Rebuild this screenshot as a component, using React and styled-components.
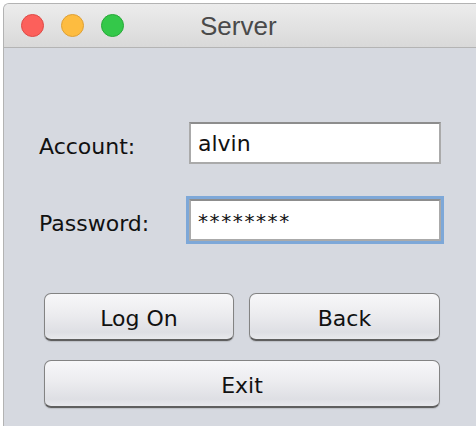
import React from "react";
import styled, { createGlobalStyle } from "styled-components";

const Global = createGlobalStyle`
  html, body {
    margin: 0;
    padding: 0;
    background: #ffffff;
    overflow: hidden;
  }
  body {
    font-family: "DejaVu Sans", "Liberation Sans", sans-serif;
  }
`;

const Window = styled.div`
  margin: 3px 0 0 3px;
  width: 473px;
  height: 423px;
  border: 1px solid #b3b3b3;
  border-right: none;
  border-bottom: none;
  border-radius: 6px 0 0 0;
  background: #d6d9e0;
  overflow: hidden;
  box-sizing: border-box;
`;

const TitleBar = styled.div`
  height: 43px;
  display: flex;
  align-items: center;
  position: relative;
  background: linear-gradient(#ececec, #d9d9d9);
  border-bottom: 1px solid #b4b4b4;
  padding-left: 17px;
  gap: 17px;
`;

const Light = styled.span`
  width: 23px;
  height: 23px;
  border-radius: 50%;
  box-sizing: border-box;
  background: ${(p) => p.fill};
  border: 1px solid ${(p) => p.edge};
`;

const Title = styled.div`
  position: absolute;
  left: 196px;
  top: 0;
  height: 43px;
  line-height: 44px;
  font-family: "Liberation Sans", Arial, sans-serif;
  font-size: 26px;
  color: #4a4a4a;
`;

const Content = styled.div`
  padding: 74px 0 0 35px;
`;

const Form = styled.div`
  display: grid;
  grid-template-columns: 150px 252px;
  row-gap: 35px;
  align-items: center;
`;

const Label = styled.label`
  font-size: 22px;
  color: #111;
  padding-top: 6px;
`;

const Field = styled.div`
  height: 42px;
  box-sizing: border-box;
  background: #fff;
  border: 2px solid #aaaaaa;
  border-top-color: #8d8d8d;
  padding-left: 7px;
  display: flex;
  align-items: center;
  font-size: 22px;
  color: #111;
  ${(p) =>
    p.focused &&
    `
    outline: 3px solid #7ea8d8;
    outline-offset: 0px;
  `}
`;

const Stars = styled.span`
  font-size: 20px;
  letter-spacing: 1.6px;
  margin-top: 2px;
`;

const Buttons = styled.div`
  margin: 52px 0 0 5px;
  width: 396px;
  display: grid;
  grid-template-columns: 190px 191px;
  column-gap: 15px;
  row-gap: 19px;
`;

const Button = styled.button`
  grid-column: ${(p) => (p.wide ? "1 / span 2" : "auto")};
  height: 48px;
  border: 1px solid #838383;
  border-bottom: 2px solid #5f5f5f;
  border-radius: 7px;
  background: linear-gradient(#f7f7f9 0%, #ececef 45%, #dedfe4 85%, #e8e9ed 100%);
  box-shadow: 0 1px 1px rgba(0, 0, 0, 0.12);
  font-family: "DejaVu Sans", "Liberation Sans", sans-serif;
  font-size: 22px;
  color: #111;
  padding: 3px 0 0;
`;

export default function App() {
  return (
    <>
      <Global />
      <Window>
        <TitleBar>
          <Light fill="#fc605b" edge="#de4a46" />
          <Light fill="#fdbc40" edge="#dea035" />
          <Light fill="#34c84a" edge="#27a938" />
          <Title>Server</Title>
        </TitleBar>
        <Content>
          <Form>
            <Label>Account:</Label>
            <Field>alvin</Field>
            <Label>Password:</Label>
            <Field focused>
              <Stars>********</Stars>
            </Field>
          </Form>
          <Buttons>
            <Button>Log On</Button>
            <Button>Back</Button>
            <Button wide>Exit</Button>
          </Buttons>
        </Content>
      </Window>
    </>
  );
}
